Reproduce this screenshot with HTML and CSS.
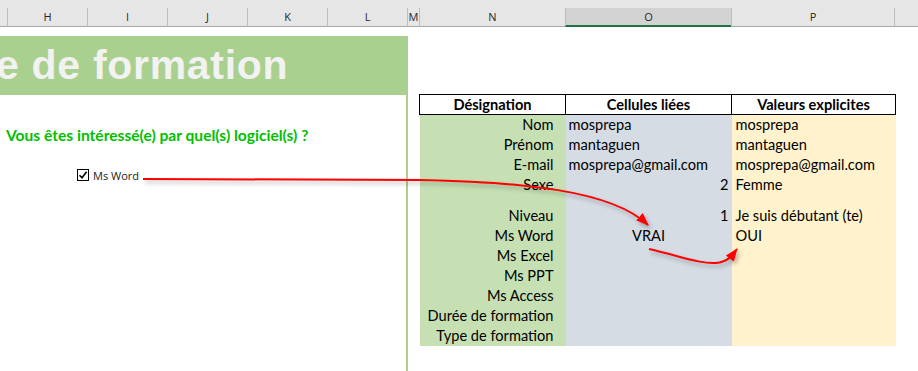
FILE: index.html
```html
<!DOCTYPE html>
<html lang="fr">
<head>
    <meta charset="UTF-8">
    <title>Formulaire de formation</title>
    <link rel="stylesheet" href="styles.css">
</head>
<body>

<div class="colheads">
    <div class="colhead"></div>
    <div class="colhead">H</div>
    <div class="colhead">I</div>
    <div class="colhead">J</div>
    <div class="colhead">K</div>
    <div class="colhead">L</div>
    <div class="colhead">M</div>
    <div class="colhead">N</div>
    <div class="colhead active">O</div>
    <div class="colhead">P</div>
    <div class="colhead"></div>
</div>

<div class="sheet">
    <div class="form">
        <div class="banner">e de formation</div>
        <p class="question">Vous êtes intéressé(e) par quel(s) logiciel(s) ?</p>
        <label class="check">
            <span class="box">
                <svg width="10" height="10" viewBox="0 0 10 10"><path d="M1.5 5.2 L4 7.8 L8.6 1.8" fill="none" stroke="#000" stroke-width="1.6"/></svg>
            </span>
            Ms Word
        </label>
    </div>

    <table class="data">
        <colgroup>
            <col class="c-des">
            <col class="c-lie">
            <col class="c-val">
        </colgroup>
        <thead>
            <tr>
                <th>Désignation</th>
                <th>Cellules liées</th>
                <th>Valeurs explicites</th>
            </tr>
        </thead>
        <tbody>
            <tr><td class="des">Nom</td><td class="lie">mosprepa</td><td class="val">mosprepa</td></tr>
            <tr><td class="des">Prénom</td><td class="lie">mantaguen</td><td class="val">mantaguen</td></tr>
            <tr><td class="des">E-mail</td><td class="lie">mosprepa@gmail.com</td><td class="val">mosprepa@gmail.com</td></tr>
            <tr><td class="des">Sexe</td><td class="lie num">2</td><td class="val">Femme</td></tr>
            <tr class="tall"><td class="des">Niveau</td><td class="lie num">1</td><td class="val">Je suis débutant (te)</td></tr>
            <tr><td class="des">Ms Word</td><td class="lie mid">VRAI</td><td class="val">OUI</td></tr>
            <tr><td class="des">Ms Excel</td><td class="lie"></td><td class="val"></td></tr>
            <tr><td class="des">Ms PPT</td><td class="lie"></td><td class="val"></td></tr>
            <tr><td class="des">Ms Access</td><td class="lie"></td><td class="val"></td></tr>
            <tr><td class="des">Durée de formation</td><td class="lie"></td><td class="val"></td></tr>
            <tr><td class="des">Type de formation</td><td class="lie"></td><td class="val"></td></tr>
        </tbody>
    </table>
</div>

<!-- fleches dessinees par-dessus la feuille -->
<svg class="arrows" width="918" height="371" viewBox="0 0 918 371">
    <defs>
        <marker id="tip" markerUnits="userSpaceOnUse" markerWidth="13" markerHeight="10" refX="12" refY="5" orient="auto">
            <path d="M0 0 L13 5 L0 10 Z" fill="#ff0000"/>
        </marker>
    </defs>
    <path d="M143 179 L420 180 C520 182 612 190 648 225" fill="none" stroke="#ff0000" stroke-width="2" marker-end="url(#tip)"/>
    <path d="M649 249 C680 256 700 264 716 263 C727 262 731 257 737 249" fill="none" stroke="#ff0000" stroke-width="2" marker-end="url(#tip)"/>
</svg>

</body>
</html>
```

FILE: styles.css
```css
body {
    margin: 0;
    background-color: #fff;
    font-family: 'Lato', 'Liberation Sans', sans-serif;
    width: 918px;
    height: 371px;
    overflow: hidden;
    position: relative;
}

/* en-tetes de colonnes */
.colheads {
    display: grid;
    grid-template-columns: 7px 80px 80px 80px 80px 80px 12px 146px 166px 163px 1fr;
    height: 27px;
    padding-top: 8px;
    box-sizing: border-box;
    background-color: #e6e6e6;
}

.colhead {
    border-left: 1px solid #bdbdbd;
    border-bottom: 1px solid #a8a8a8;
    font-family: 'Open Sans', sans-serif;
    font-size: 11px;
    line-height: 18px;
    text-align: center;
    color: #262626;
}

.colhead:first-child {
    border-left: none;
}

.colhead.active {
    background-color: #d2d2d2;
    border-bottom: 2px solid #217346;
    line-height: 17px;
}

.sheet {
    display: flex;
    align-items: flex-start;
}

/* formulaire a gauche */
.form {
    width: 406px;
    height: 335px;
    margin-top: 9px;
    border-right: 2px solid #a9d08e;
}

.banner {
    height: 59px;
    background-color: #a9d08e;
    color: #f2f2f2;
    font-family: 'Liberation Sans', Arial, sans-serif;
    font-weight: bold;
    font-size: 41px;
    letter-spacing: 0.7px;
    line-height: 59px;
    white-space: nowrap;
    overflow: hidden;
    text-indent: -4px;
}

.question {
    margin: 30px 0 0 6px;
    color: #00c000;
    font-weight: bold;
    font-size: 15.6px;
    line-height: 20px;
}

.check {
    display: flex;
    align-items: center;
    gap: 4px;
    margin: 23px 0 0 77px;
    font-family: 'Open Sans', sans-serif;
    font-size: 11px;
    color: #222;
    height: 14px;
}

.box {
    width: 12px;
    height: 12px;
    box-sizing: border-box;
    border: 1px solid #000;
    display: flex;
    align-items: center;
    justify-content: center;
    background-color: #fff;
}

/* tableau a droite */
.data {
    margin: 67px 0 0 11px;
    width: 476px;
    table-layout: fixed;
    border-collapse: collapse;
    font-size: 14.6px;
    color: #000;
}

.c-des { width: 146px; }
.c-lie { width: 166px; }
.c-val { width: 164px; }

.data th {
    height: 19px;
    padding: 0;
    border: 1px solid #000;
    background-color: #fff;
    font-weight: bold;
    text-align: center;
    line-height: 18px;
}

.data td {
    height: 20px;
    padding: 0 3px;
    vertical-align: bottom;
    line-height: 20px;
    white-space: nowrap;
}

.data tr.tall td {
    height: 31px;
}

.des {
    background-color: #c6e0b4;
    text-align: right;
    padding-right: 12px !important;
}

.lie {
    background-color: #d6dce4;
}

.val {
    background-color: #fff2cc;
    padding-left: 4px !important;
}

.num {
    text-align: right;
}

.mid {
    text-align: center;
}

.arrows {
    position: absolute;
    top: 0;
    left: 0;
    pointer-events: none;
    filter: drop-shadow(2px 3px 2px rgba(0, 0, 0, 0.28));
}
```
